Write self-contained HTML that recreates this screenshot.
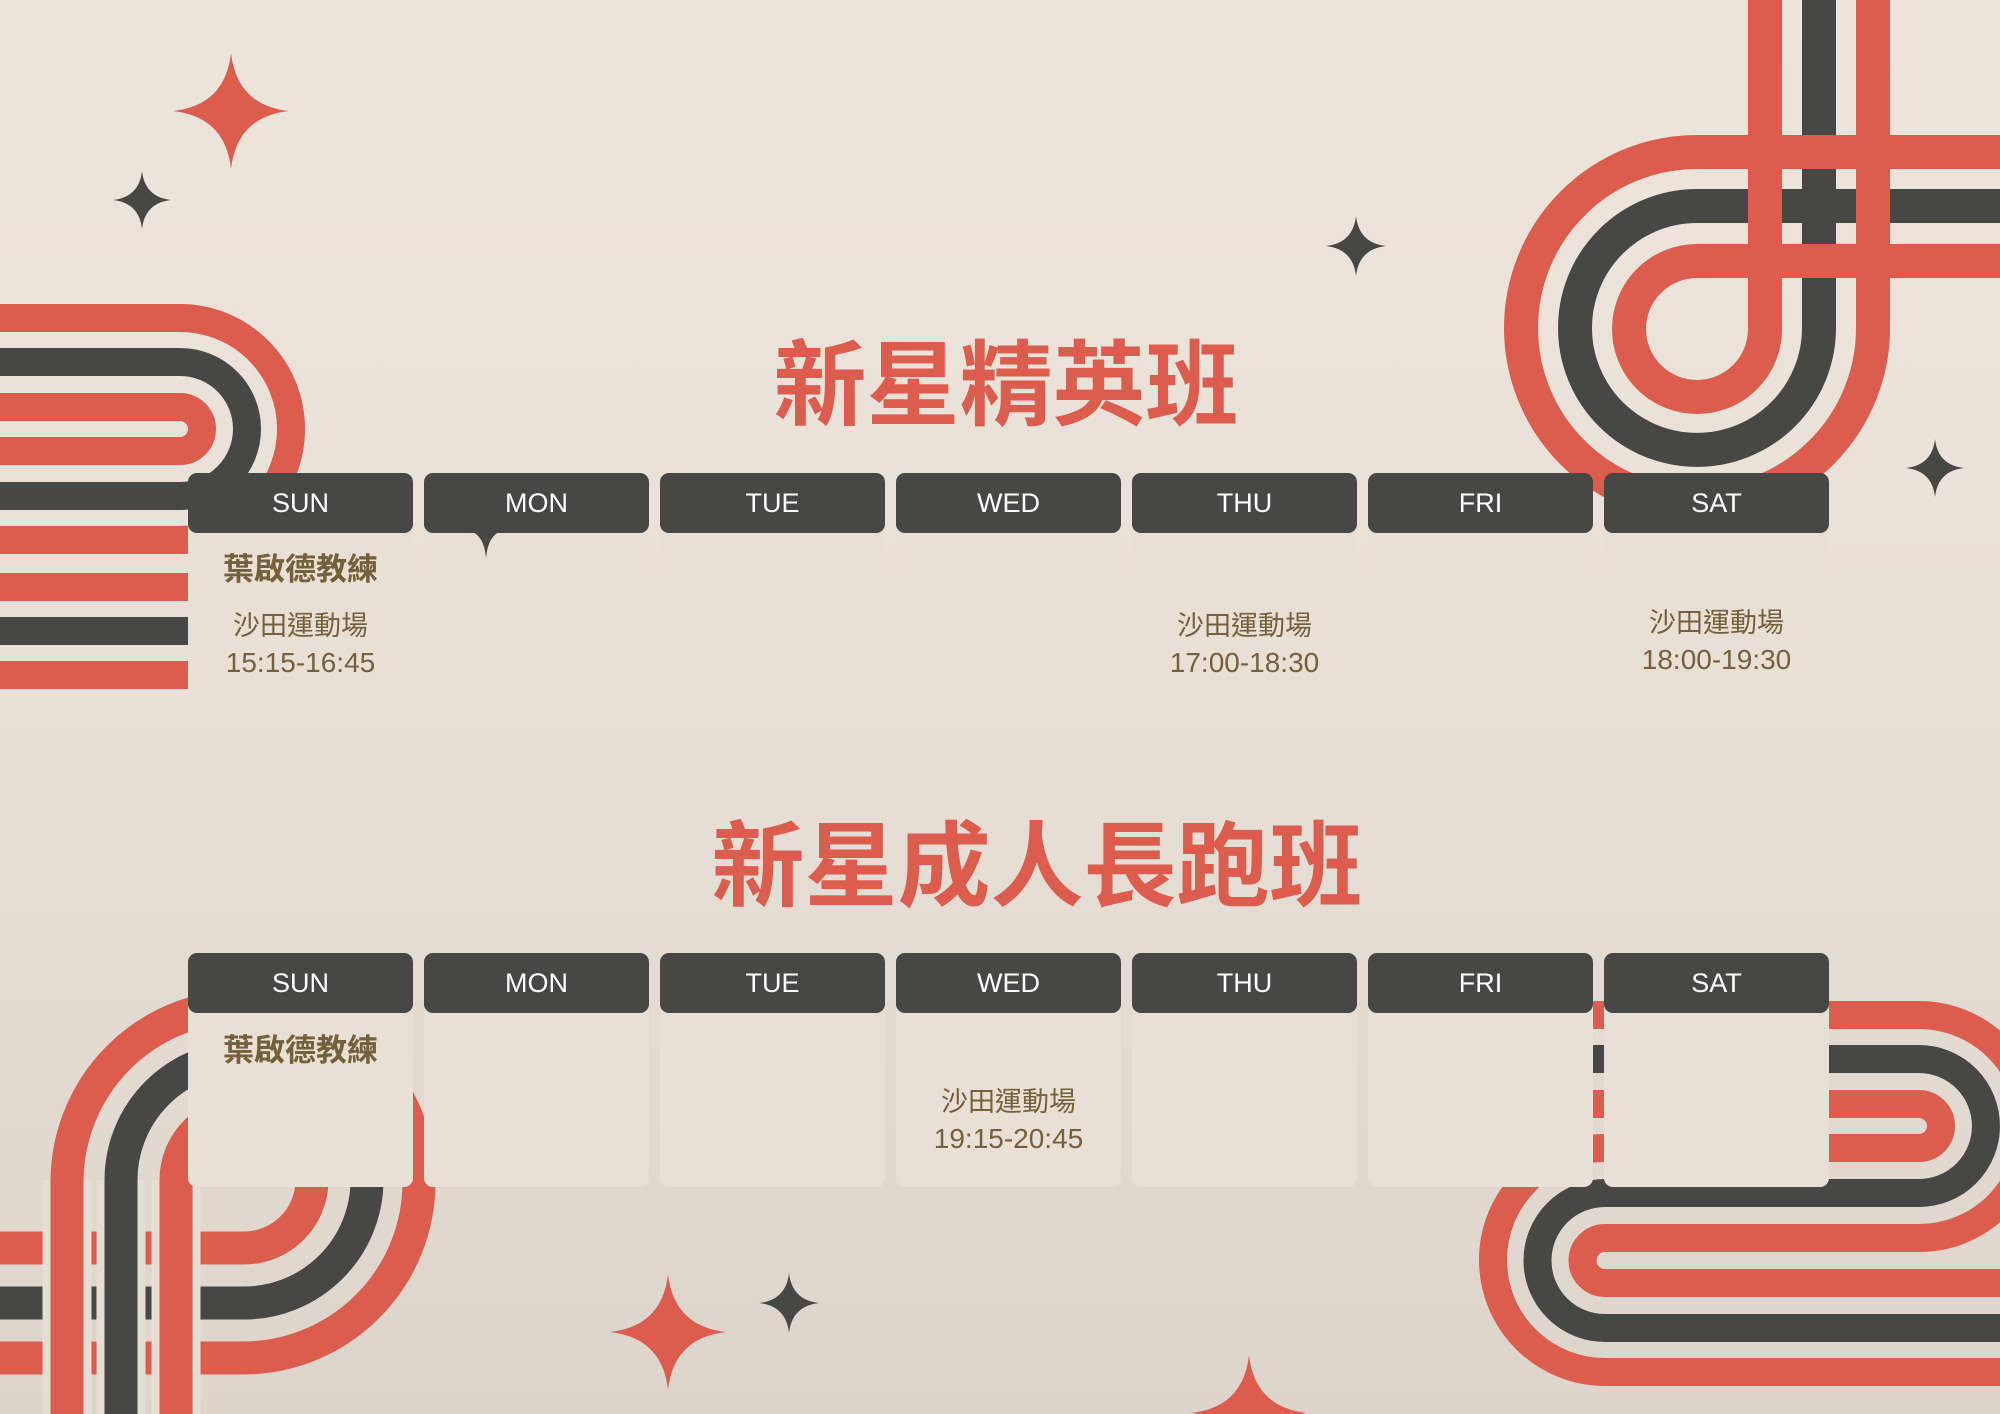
<!DOCTYPE html>
<html><head><meta charset="utf-8">
<style>
*{margin:0;padding:0;box-sizing:border-box}
html,body{width:2000px;height:1414px;overflow:hidden}
body{position:relative;background:linear-gradient(180deg,#ede4db 0%,#e9e0d7 45%,#ddd5cc 100%);font-family:"Liberation Sans","Noto Sans CJK TC",sans-serif}
svg.bg{position:absolute;left:0;top:0}
.title{position:absolute;left:0;width:2000px;text-align:center;color:#dc5c4e;font-family:"Noto Sans CJK TC","Noto Sans CJK SC",sans-serif;font-weight:700;font-size:93px;line-height:93px}
.card{position:absolute;width:225px}
.hd{height:60px;background:#474745;border-radius:9px;color:#fff;font-size:27px;line-height:60px;text-align:center;position:relative;z-index:2}
.bd{background:#e8dfd5;border-radius:0 0 9px 9px;margin-top:-8px;position:relative}
.t{position:absolute;left:0;width:225px;text-align:center;color:#74603b}
.nm{font-family:"Noto Sans CJK TC",sans-serif;font-weight:700;font-size:31px;line-height:31px}
.vn{font-family:"Noto Sans CJK TC",sans-serif;font-size:27px;line-height:28px}
.tm{font-size:28px;line-height:28px}
</style></head><body>
<svg class="bg" width="2000" height="1414" viewBox="0 0 2000 1414" fill="none">
<defs>
<path id="st" d="M0,-1 Q0.1,-0.1 1,0 Q0.1,0.1 0,1 Q-0.1,0.1 -1,0 Q-0.1,-0.1 0,-1Z"/>
</defs>
<!-- top right -->
<g stroke-width="34">
<path d="M1873,328 V0" stroke="#dc5c4e"/>
<path d="M2000,206 H1697 A122 122 0 0 0 1575,328 A122 122 0 0 0 1819,328 V0" stroke="#474745"/>
<path d="M2000,152 H1697 A176 176 0 0 0 1521,328 A176 176 0 0 0 1873,328" stroke="#dc5c4e"/>
<path d="M2000,261 H1697 A68 68 0 0 0 1629,329 A68 68 0 0 0 1765,329 V0" stroke="#dc5c4e"/>
<path d="M1819,180 V232" stroke="#474745"/>
<path d="M1873,180 V232" stroke="#dc5c4e"/>
</g>
<!-- left -->
<g stroke-width="28">
<path d="M0,318 H180 A111 111 0 0 1 180,540 H0" stroke="#dc5c4e"/>
<path d="M0,362 H180 A67 67 0 0 1 180,496 H0" stroke="#474745"/>
<path d="M0,407 H180 A22 22 0 0 1 180,451 H0" stroke="#dc5c4e"/>
<path d="M0,587 H200" stroke="#dc5c4e"/>
<path d="M0,631 H200" stroke="#474745"/>
<path d="M0,675 H200" stroke="#dc5c4e"/>
</g>
<!-- bottom left -->
<g stroke-width="33">
<path d="M0,1248 H244 A68 68 0 0 0 312,1180 A68 68 0 0 0 176,1180" stroke="#dc5c4e"/>
<path d="M0,1303 H244 A123 123 0 0 0 367,1180 A123 123 0 0 0 121,1180" stroke="#474745"/>
<path d="M0,1358 H243 A176 176 0 0 0 419,1182 A176 176 0 0 0 67,1182" stroke="#dc5c4e"/>
<g stroke="#e6ddd3" stroke-width="49">
<path d="M67,1180 V1414"/><path d="M121,1180 V1414"/><path d="M176,1180 V1414"/>
</g>
<path d="M176,1180 V1414" stroke="#dc5c4e"/>
<path d="M121,1180 V1414" stroke="#474745"/>
<path d="M67,1180 V1414" stroke="#dc5c4e"/>
</g>
<!-- bottom right -->
<g stroke-width="28">
<path d="M1580,1015 H1919 A111.5 111.5 0 0 1 1919,1238 H1605 A22.5 22.5 0 0 0 1605,1283 H2000" stroke="#dc5c4e"/>
<path d="M1580,1059 H1919 A67 67 0 0 1 1919,1193 H1605 A67.5 67.5 0 0 0 1605,1328 H2000" stroke="#474745"/>
<path d="M1580,1104 H1919 A22 22 0 0 1 1919,1148 H1605 A112 112 0 0 0 1605,1372 H2000" stroke="#dc5c4e"/>
</g>
<!-- stars -->
<use href="#st" fill="#dc5c4e" transform="translate(231,111) scale(58)"/>
<use href="#st" fill="#474745" transform="translate(142,200) scale(29)"/>
<use href="#st" fill="#474745" transform="translate(1356,246) scale(30)"/>
<use href="#st" fill="#474745" transform="translate(1935,468) scale(29)"/>
<use href="#st" fill="#dc5c4e" transform="translate(668,1332) scale(58)"/>
<use href="#st" fill="#474745" transform="translate(789,1303) scale(30)"/>
<use href="#st" fill="#dc5c4e" transform="translate(1249,1413) scale(58)"/>
</svg>

<div class="title" style="top:331px;padding-left:12px">新星精英班</div>
<div class="title" style="top:812px;padding-left:74px">新星成人長跑班</div>

<!-- table 1 -->
<div class="card" style="left:188px;top:473px"><div class="hd">SUN</div><div class="bd" style="height:189px">
<div class="t nm" style="top:26px">葉啟德教練</div>
<div class="t vn" style="top:85px">沙田運動場</div>
<div class="t tm" style="top:124px">15:15-16:45</div></div></div>
<div class="card" style="left:424px;top:473px"><div class="hd">MON</div>
<svg style="position:absolute;left:46px;top:58px;z-index:3" width="32" height="28" viewBox="0 0 32 28"><path d="M0,0 H32 Q18,4 16,27 Q14,4 0,0Z" fill="#474745"/></svg>
<div class="bd" style="height:189px"></div></div>
<div class="card" style="left:660px;top:473px"><div class="hd">TUE</div><div class="bd" style="height:189px"></div></div>
<div class="card" style="left:896px;top:473px"><div class="hd">WED</div><div class="bd" style="height:189px"></div></div>
<div class="card" style="left:1132px;top:473px"><div class="hd">THU</div><div class="bd" style="height:189px">
<div class="t vn" style="top:85px">沙田運動場</div>
<div class="t tm" style="top:124px">17:00-18:30</div></div></div>
<div class="card" style="left:1368px;top:473px"><div class="hd">FRI</div><div class="bd" style="height:189px"></div></div>
<div class="card" style="left:1604px;top:473px"><div class="hd">SAT</div><div class="bd" style="height:189px">
<div class="t vn" style="top:82px">沙田運動場</div>
<div class="t tm" style="top:121px">18:00-19:30</div></div></div>

<!-- table 2 -->
<div class="card" style="left:188px;top:953px"><div class="hd">SUN</div><div class="bd" style="height:182px">
<div class="t nm" style="top:27px">葉啟德教練</div></div></div>
<div class="card" style="left:424px;top:953px"><div class="hd">MON</div><div class="bd" style="height:182px"></div></div>
<div class="card" style="left:660px;top:953px"><div class="hd">TUE</div><div class="bd" style="height:182px"></div></div>
<div class="card" style="left:896px;top:953px"><div class="hd">WED</div><div class="bd" style="height:182px">
<div class="t vn" style="top:81px">沙田運動場</div>
<div class="t tm" style="top:120px">19:15-20:45</div></div></div>
<div class="card" style="left:1132px;top:953px"><div class="hd">THU</div><div class="bd" style="height:182px"></div></div>
<div class="card" style="left:1368px;top:953px"><div class="hd">FRI</div><div class="bd" style="height:182px"></div></div>
<div class="card" style="left:1604px;top:953px"><div class="hd">SAT</div><div class="bd" style="height:182px"></div></div>
</body></html>
